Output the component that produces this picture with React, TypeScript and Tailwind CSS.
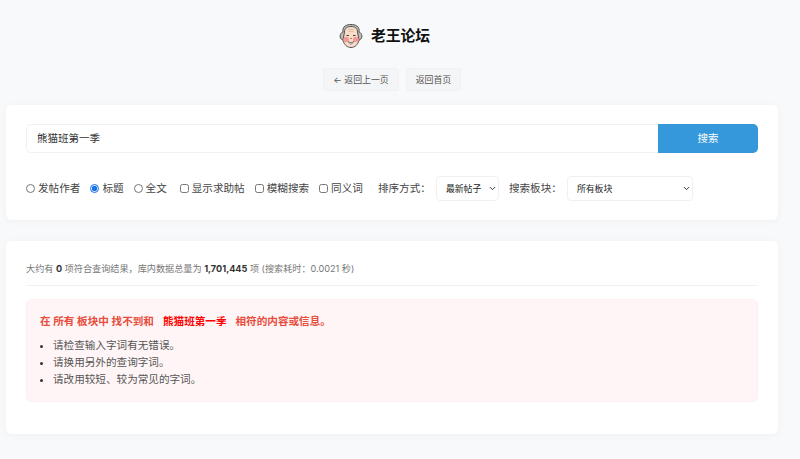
import { ChevronDown } from "lucide-react";

function Select({ label, width }: { label: string; width: string }) {
  return (
    <span className={`relative block h-[25px] ${width}`}>
      <select className="appearance-none w-full h-full border border-[#eef0f2] rounded-[4px] bg-white pl-[9px] text-[8.9px] text-[#222] outline-none">
        <option>{label}</option>
      </select>
      <ChevronDown size={9} strokeWidth={2.4} className="absolute right-[2px] top-[8px] text-[#222]" />
    </span>
  );
}

export default function App() {
  return (
    <div className="min-h-[459px] bg-[#f8f9fb] pt-[22px] pl-[6px] pr-[22px] pb-[25px] font-['Inter','Noto_Sans_CJK_SC',sans-serif] text-[#333]">
      <div className="flex items-center justify-center pr-[16px] h-[28px]">
        <svg width="26" height="26" viewBox="0 0 26 26" className="mr-[7px]">
          <path d="M5 9 C4 3 9 1.5 13 1.5 C17 1.5 22 3 21 9 C24.5 10 25 15.5 21.5 17 L4.5 17 C1 15.5 1.5 10 5 9Z" fill="#bdbdb8" stroke="#55524e" strokeWidth="1" />
          <path d="M6.5 9 C6.5 5 9.5 3.5 13 3.5 C16.500 3.500 19.5 5 19.5 9 L21 17 C20 22 16.500 24.500 13 24.500 C9.5 24.500 6 22 5 17Z" fill="#f8dcc8" stroke="#55524e" strokeWidth="1" />
          <circle cx="8.2" cy="16.500" r="2.8" fill="#f29a9a" />
          <circle cx="17.8" cy="16.500" r="2.8" fill="#f29a9a" />
          <path d="M8.500 12.500h2.500M15 12.500h2.500" stroke="#444" strokeWidth="1.2" />
          <path d="M10 6.500h6M10.500 8.500h5" stroke="#d9b39e" strokeWidth="0.8" />
          <path d="M10.500 18.500 C12 20 14 20 15.500 18.500 C14.500 21.800 11.500 21.800 10.500 18.500Z" fill="#fff" stroke="#555" strokeWidth="0.7" />
          <path d="M12 15.500h2" stroke="#b87f6a" strokeWidth="1" />
        </svg>
        <h1 className="text-[14.8px] font-bold text-[#111] leading-none">老王论坛</h1>
      </div>
      <div className="flex justify-center gap-[7px] mt-[18px] text-[8.9px] text-[#555]">
        <a className="w-[76px] h-[23px] flex items-center justify-center rounded-[3px] bg-[#f4f5f7] border border-[#f0f1f3]">← 返回上一页</a>
        <a className="w-[55px] h-[23px] flex items-center justify-center rounded-[3px] bg-[#f4f5f7] border border-[#f0f1f3]">返回首页</a>
      </div>

      <section className="mt-[14px] h-[115px] bg-white rounded-[6px] shadow-[0_1px_8px_rgba(0,0,0,0.04)] px-[20px] pt-[19px]">
        <div className="flex h-[29px]">
          <input
            readOnly
            value="熊猫班第一季"
            className="flex-1 min-w-0 border border-r-0 border-[#f0f1f3] rounded-l-[5px] pl-[10px] pt-[1px] text-[10.5px] text-[#333] outline-none"
          />
          <button className="w-[100px] bg-[#3498db] rounded-r-[5px] text-white text-[10.5px]">搜索</button>
        </div>
        <div className="flex items-center mt-[23px] h-[25px] text-[10.6px] text-[#444]">
          <label className="flex items-center mr-[10px]">
            <input type="radio" name="scope" readOnly className="w-[9px] h-[9px] m-0 mr-[3px]" />发帖作者
          </label>
          <label className="flex items-center mr-[10px]">
            <input type="radio" name="scope" defaultChecked className="w-[9px] h-[9px] m-0 mr-[3px] accent-[#1a73e8]" />标题
          </label>
          <label className="flex items-center mr-[13px]">
            <input type="radio" name="scope" className="w-[9px] h-[9px] m-0 mr-[3px]" />全文
          </label>
          <label className="flex items-center mr-[10px]">
            <input type="checkbox" className="w-[9px] h-[9px] m-0 mr-[3px]" />显示求助帖
          </label>
          <label className="flex items-center mr-[10px]">
            <input type="checkbox" className="w-[9px] h-[9px] m-0 mr-[3px]" />模糊搜索
          </label>
          <label className="flex items-center mr-[15px]">
            <input type="checkbox" className="w-[9px] h-[9px] m-0 mr-[3px]" />同义词
          </label>
          <span className="w-[58px]">排序方式：</span>
          <Select label="最新帖子" width="w-[63px]" />
          <span className="w-[58px] ml-[10px]">搜索板块：</span>
          <Select label="所有板块" width="w-[126px]" />
        </div>
      </section>

      <section className="mt-[21px] h-[193px] bg-white rounded-[6px] shadow-[0_1px_8px_rgba(0,0,0,0.04)] px-[20px] pt-[20px]">
        <p className="h-[25px] pt-[1px] border-b border-[#f0f1f3] text-[9.15px] leading-[14px] text-[#777]">
          大约有 <b className="text-[#333]">0</b> 项符合查询结果，库内数据总量为 <b className="text-[#333]">1,701,445</b> 项 (搜索耗时：0.0021 秒)
        </p>
        <div className="mt-[13px] h-[103px] rounded-[6px] bg-[#fff5f6] border border-[#fdeff0] pl-[13px] pt-[14px]">
          <p className="text-[10.6px] leading-[16px] font-semibold text-[#e74c3c]">
            在 所有 板块中 找不到和<b className="ml-[9px] mr-[9px] font-bold text-[#f00]">熊猫班第一季</b>相符的内容或信息。
          </p>
          <ul className="mt-[7px] list-disc pl-[13px] text-[10.6px] leading-[17px] text-[#555] marker:text-[#333]">
            <li>请检查输入字词有无错误。</li>
            <li>请换用另外的查询字词。</li>
            <li>请改用较短、较为常见的字词。</li>
          </ul>
        </div>
      </section>
    </div>
  );
}
